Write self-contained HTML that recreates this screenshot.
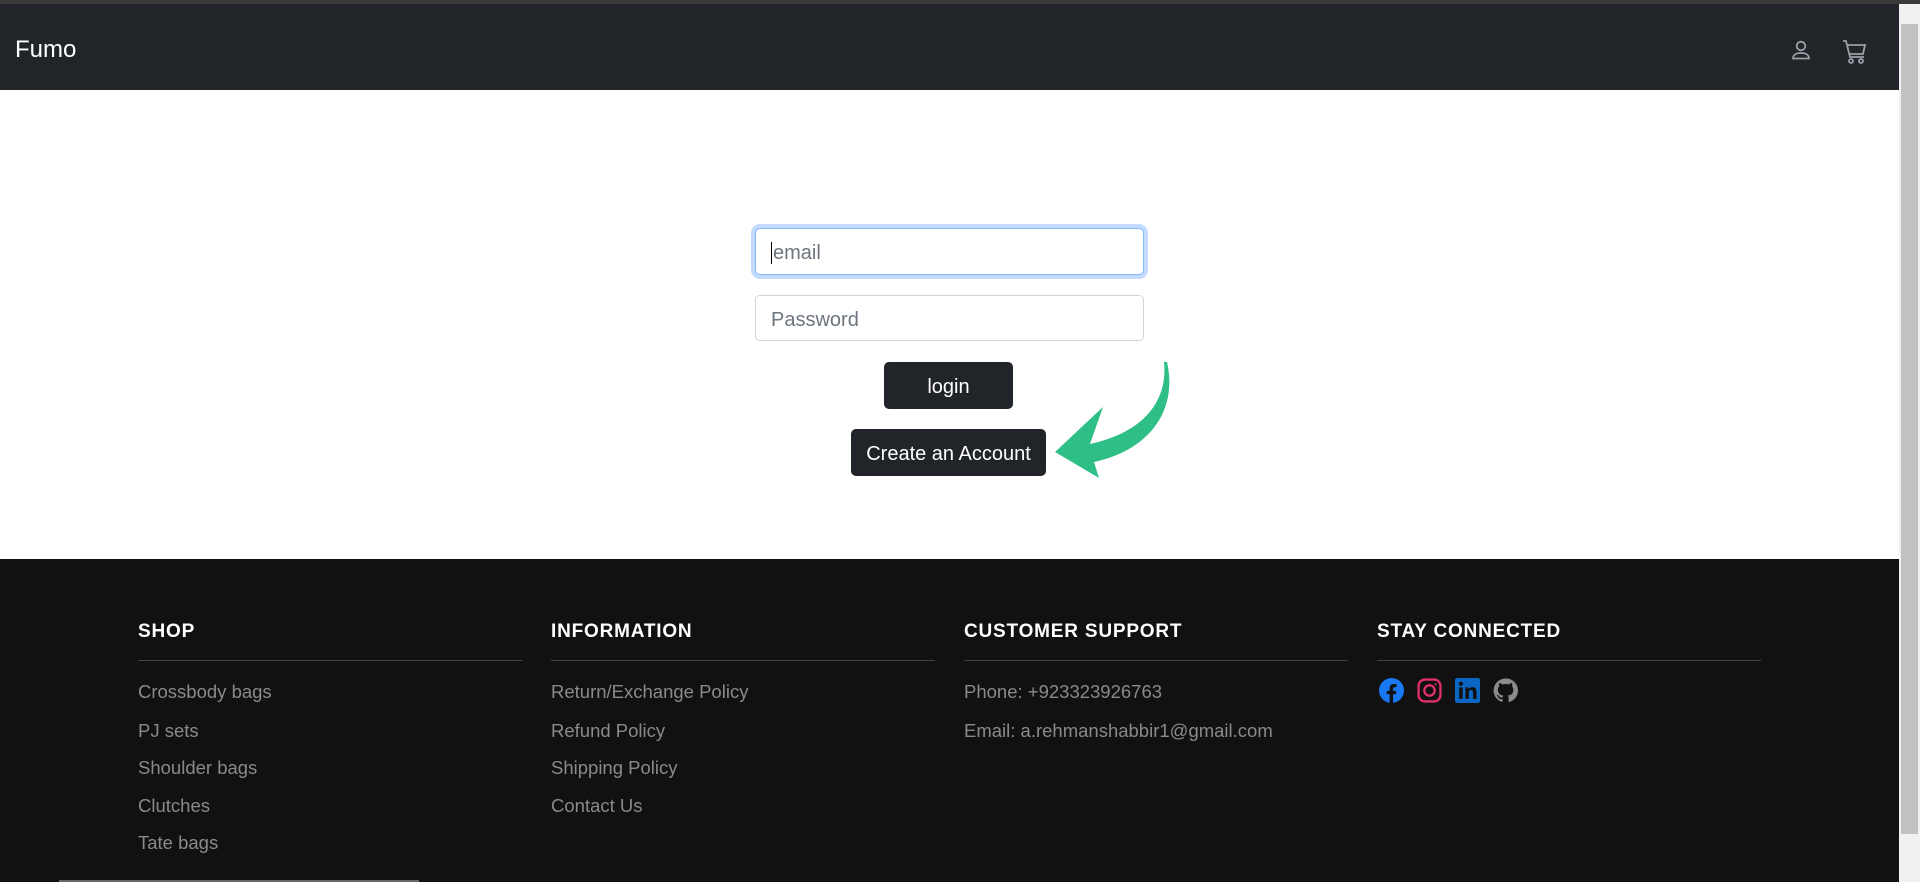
<!DOCTYPE html>
<html><head><meta charset="utf-8"><style>
*{box-sizing:border-box;margin:0;padding:0}
html,body{width:1920px;height:882px;overflow:hidden;background:#fff;font-family:"Liberation Sans",sans-serif}
.topline{position:absolute;left:0;top:0;width:1920px;height:4px;background:#3a3a3a}
nav{position:absolute;left:0;top:4px;width:1899px;height:86px;background:#212529}
.brand{position:absolute;left:15px;top:32px;color:#fff;font-size:24px;line-height:28px}
.sb{position:absolute;left:1899px;top:4px;width:21px;height:878px;background:#f1f1f1}
.thumb{position:absolute;left:1901px;top:24px;width:17px;height:810px;background:#c1c1c1}
.inp{position:absolute;left:755px;width:389px;height:46px;border:1px solid #ced4da;border-radius:5px;background:#fff;color:#6c757d;font-size:20px;line-height:48px;padding-left:15px}
.focus{border-color:#86b7fe;box-shadow:0 0 0 4px #c2dbfe}
.btn{position:absolute;background:#212529;color:#fff;font-size:20px;border-radius:5px;text-align:center;line-height:50px;height:47px}
footer{position:absolute;left:0;top:559px;width:1899px;height:323px;background:#111}
.col{position:absolute;top:0;width:384px}
.col h5{position:absolute;top:61px;left:0;color:#fff;font-size:19px;font-weight:bold;letter-spacing:.8px;line-height:24px}
.col hr{position:absolute;top:101px;left:0;width:384px;border:0;border-top:1px solid #444}
.col a{position:absolute;left:0;color:#8a8a8a;font-size:18.5px;line-height:24px;text-decoration:none;white-space:nowrap}
.icons{position:absolute;top:119px;left:2px;display:flex;gap:13px}
</style></head><body>
<div class="topline"></div>
<nav><div class="brand">Fumo</div>
<svg style="position:absolute;left:1789px;top:34px" width="24" height="24" viewBox="0 0 24 24" fill="none" stroke="#9aa0a6" stroke-width="1.8"><circle cx="12" cy="8" r="4.3"/><path d="M4 20.5c0-3.5 3-5.5 8-5.5s8 2 8 5.5z"/></svg>
<svg style="position:absolute;left:1841px;top:33px" width="28" height="28" viewBox="0 0 28 28" fill="none" stroke="#9aa0a6" stroke-width="1.8"><path d="M2 4h3l4 16h14"/><path d="M6 8h18l-2 9H8"/><circle cx="10" cy="24" r="2"/><circle cx="20" cy="24" r="2"/></svg>
</nav>
<div class="sb"></div><div class="thumb"></div>
<div class="inp focus" style="top:228px;height:47px"><span style="border-left:1px solid #000;padding-left:1px">email</span></div>
<div class="inp" style="top:295px">Password</div>
<div class="btn" style="left:884px;top:362px;width:129px">login</div>
<div class="btn" style="left:851px;top:429px;width:195px">Create an Account</div>
<svg style="position:absolute;left:0;top:0" width="1920" height="882"><path d="M1164,362 C1168,400 1145,432 1090,444 L1103,407 L1055,452 L1099,478 L1094,462 C1150,450 1178,410 1167,362 Z" fill="#2ebf86"/></svg>
<footer>
<div class="col" style="left:138px"><h5>SHOP</h5><hr>
<a style="top:121px">Crossbody bags</a><a style="top:160px">PJ sets</a><a style="top:197px">Shoulder bags</a><a style="top:235px">Clutches</a><a style="top:272px">Tate bags</a></div>
<div class="col" style="left:551px"><h5>INFORMATION</h5><hr>
<a style="top:121px">Return/Exchange Policy</a><a style="top:160px">Refund Policy</a><a style="top:197px">Shipping Policy</a><a style="top:235px">Contact Us</a></div>
<div class="col" style="left:964px"><h5>CUSTOMER SUPPORT</h5><hr>
<a style="top:121px">Phone: +923323926763</a><a style="top:160px">Email: a.rehmanshabbir1@gmail.com</a></div>
<div class="col" style="left:1377px"><h5>STAY CONNECTED</h5><hr>
<div class="icons">
<svg width="25" height="25" viewBox="0 0 24 24"><circle cx="12" cy="12" r="12" fill="#1877f2"/><path d="M13.5 24v-8.5h2.8l.4-3.2h-3.2v-2c0-.9.3-1.6 1.6-1.6h1.7V5.8c-.3 0-1.3-.1-2.5-.1-2.5 0-4.1 1.5-4.1 4.2v2.4H7.4v3.2h2.8V24z" fill="#111"/></svg>
<svg width="25" height="25" viewBox="0 0 24 24" fill="none" stroke="#e1306c" stroke-width="2.2"><rect x="1.5" y="1.5" width="21" height="21" rx="6"/><circle cx="12" cy="12" r="5"/><circle cx="18" cy="6" r="1" fill="#e1306c" stroke="none"/></svg>
<svg width="25" height="25" viewBox="0 0 24 24"><rect width="24" height="24" rx="2" fill="#0a66c2"/><rect x="4" y="9" width="3.4" height="11" fill="#111"/><circle cx="5.7" cy="5.5" r="2" fill="#111"/><path d="M10 9h3.2v1.6c.6-1 1.8-1.9 3.6-1.9 3.3 0 3.9 2.1 3.9 4.9V20h-3.4v-5.6c0-1.4-.1-2.9-1.9-2.9s-2.1 1.4-2.1 2.8V20H10z" fill="#111"/></svg>
<svg width="25" height="25" viewBox="0 0 24 24"><path fill="#8a8a8a" d="M12 .5a11.5 11.5 0 0 0-3.6 22.4c.6.1.8-.3.8-.6v-2.1c-3.2.7-3.9-1.5-3.9-1.500-.5-1.3-1.3-1.7-1.3-1.7-1-.7.1-.7.1-.7 1.2.1 1.8 1.2 1.8 1.2 1 1.8 2.7 1.3 3.4 1 .1-.8.4-1.3.7-1.6-2.6-.3-5.3-1.3-5.3-5.7 0-1.3.5-2.3 1.2-3.1-.1-.3-.5-1.5.1-3.1 0 0 1-.3 3.2 1.2a11 11 0 0 1 5.8 0c2.2-1.5 3.2-1.2 3.2-1.2.6 1.6.2 2.8.1 3.1.8.8 1.2 1.9 1.2 3.1 0 4.4-2.7 5.4-5.3 5.7.4.4.8 1.1.8 2.2v3.3c0 .3.2.7.8.6A11.5 11.5 0 0 0 12 .5z"/></svg>
</div></div>
<div style="position:absolute;left:59px;top:321px;width:360px;height:2px;background:#666"></div>
</footer>
</body></html>
